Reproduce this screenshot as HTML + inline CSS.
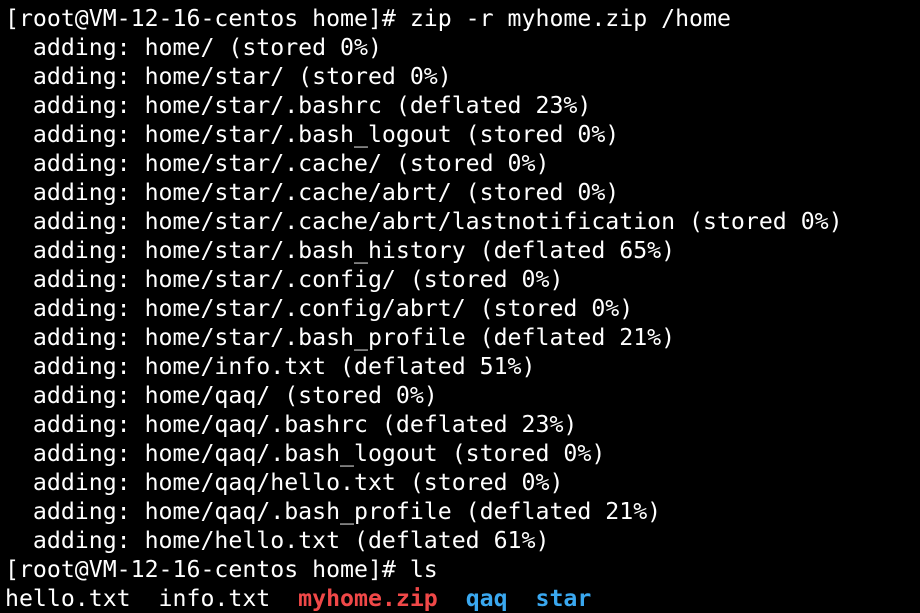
<!DOCTYPE html>
<html><head><style>
html,body{margin:0;padding:0;background:#000;}
body{width:920px;height:612px;overflow:hidden;}
pre{margin:0;padding:4px 0 0 5px;font-family:"DejaVu Sans Mono","Liberation Mono",monospace;font-size:23.2px;line-height:29px;color:#fff;}
.r{color:#f04848;font-weight:bold}
.b{color:#3aa8f0;font-weight:bold}
</style></head><body><pre>[root@VM-12-16-centos home]# zip -r myhome.zip /home
  adding: home/ (stored 0%)
  adding: home/star/ (stored 0%)
  adding: home/star/.bashrc (deflated 23%)
  adding: home/star/.bash_logout (stored 0%)
  adding: home/star/.cache/ (stored 0%)
  adding: home/star/.cache/abrt/ (stored 0%)
  adding: home/star/.cache/abrt/lastnotification (stored 0%)
  adding: home/star/.bash_history (deflated 65%)
  adding: home/star/.config/ (stored 0%)
  adding: home/star/.config/abrt/ (stored 0%)
  adding: home/star/.bash_profile (deflated 21%)
  adding: home/info.txt (deflated 51%)
  adding: home/qaq/ (stored 0%)
  adding: home/qaq/.bashrc (deflated 23%)
  adding: home/qaq/.bash_logout (stored 0%)
  adding: home/qaq/hello.txt (stored 0%)
  adding: home/qaq/.bash_profile (deflated 21%)
  adding: home/hello.txt (deflated 61%)
[root@VM-12-16-centos home]# ls
hello.txt  info.txt  <span class="r">myhome.zip</span>  <span class="b">qaq</span>  <span class="b">star</span></pre></body></html>
